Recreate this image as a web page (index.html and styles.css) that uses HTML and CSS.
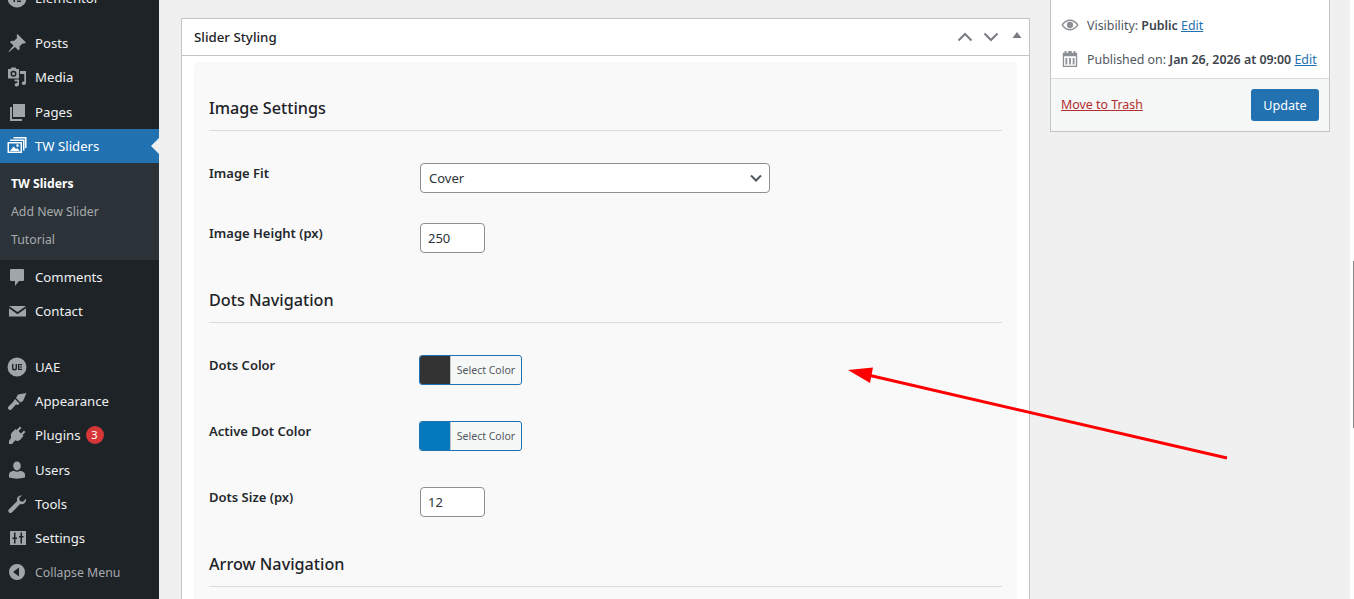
FILE: index.html
```html
<!DOCTYPE html>
<html lang="en">
<head>
<meta charset="utf-8">
<title>Edit Slider</title>
<link rel="stylesheet" href="styles.css">
</head>
<body>
<div class="app">
  <nav class="side">
    <div class="item item-top"><svg class="ic" viewBox="0 0 20 20"><path fill-rule="evenodd" d="M10 .5a9.500 9.500 0 1 1 0 19 9.500 9.500 0 0 1 0-19zM6.500 6v8H8V6zM10 6v1.500h4V6zm0 3.200v1.600h4V9.200zm0 3.300V14h4v-1.500z"/></svg><span>Elementor</span></div>
    <div class="gap-a"></div>
    <div class="item"><svg class="ic" viewBox="0 0 20 20"><path d="M10.400 1 19 9.600c-.9.900-2.200 1.200-3.400.8l-3.200 3.200c.5 1.500.2 3-.8 4L8 14l-6 5-.5-.5 5-6L2.900 8.900c1-1 2.600-1.300 4-.8L10.100 4.900C9.700 3.500 9.500 2 10.400 1z"/></svg><span>Posts</span></div>
    <div class="item"><svg class="ic" viewBox="0 0 20 20"><path fill-rule="evenodd" d="M1 2h2.500l1-1.500h4L9.500 2H12v9.500H1zm5.500 1.700a3 3 0 1 0 0 6 3 3 0 0 0 0-6zM6.500 5.200a1.500 1.500 0 1 1 0 3 1.500 1.500 0 0 1 0-3zM13 4h6v12c0 1.200-1 2-2.200 2s-2-.7-2-1.700.9-1.700 2-1.700l.5.100V7h-4.300zM7.500 12.500h4.500v5c0 1.100-.9 2-2 2s-2.300-.6-2.300-1.600.9-1.800 2-1.800l.6.100V14.300H7.500z"/></svg><span>Media</span></div>
    <div class="item"><svg class="ic" viewBox="0 0 20 20"><path d="M6 2h12v13H6zM3 5h2v12h10v2H3z"/></svg><span>Pages</span></div>
    <div class="item item-active"><svg class="ic ic-white" viewBox="0 0 20 20"><path fill-rule="evenodd" d="M5 1h14.500v11H18V2.500H6.500V1zM3 3.500h14.500v11H16V5H3zM.5 6H15v11H.5zm1.500 1.500v8h11.500v-8zm8.500.800a1.300 1.300 0 1 1 0 2.600 1.300 1.300 0 0 1 0-2.600zM3 15l3.500-4.500 2.500 2.500 1.500-1 2 3z"/></svg><span>TW Sliders</span></div>
    <div class="sub">
      <div class="sub-item sub-current">TW Sliders</div>
      <div class="sub-item">Add New Slider</div>
      <div class="sub-item">Tutorial</div>
    </div>
    <div class="item"><svg class="ic" viewBox="0 0 20 20"><path d="M4 2h12a1 1 0 0 1 1 1v10a1 1 0 0 1-1 1h-4l-4 5v-5H4a1 1 0 0 1-1-1V3a1 1 0 0 1 1-1z"/></svg><span>Comments</span></div>
    <div class="item"><svg class="ic" viewBox="0 0 20 20"><path d="M2 5h17l-8.500 6zM2 7.200V15.500h17V7.200l-8.500 6z"/></svg><span>Contact</span></div>
    <div class="gap-b"></div>
    <div class="item"><svg class="ic" viewBox="0 0 20 20"><path fill-rule="evenodd" d="M10 .5a9.500 9.500 0 1 1 0 19 9.500 9.500 0 0 1 0-19zM5 7v4a2.500 2.500 0 0 0 5 0V7H8.600v4a1.100 1.100 0 0 1-2.200 0V7zm6 0v6h4v-1.200h-2.800V7zm1.500 0v1.200H15V7zm0 2.400v1.200H15V9.400z"/></svg><span>UAE</span></div>
    <div class="item"><svg class="ic" viewBox="0 0 20 20"><path d="M11 3.500 19.500 2 16 10l-2.500 1.500L9 7zM8 8l4.500 4.500-1.500 1.500-2-.5-4.500 5c-1 .9-2.500.5-3.200-.4-.6-.8-.6-1.900.2-2.700L6 11z"/></svg><span>Appearance</span></div>
    <div class="item"><svg class="ic" viewBox="0 0 20 20"><path d="M13 1.500 14.500 3 11.500 6l2.500 2.500 3-3 1.500 1.500-3 3 1 1-3 3.500c-1.400 1.500-3.500 1.800-5.200.8L5 19H2v-3l2.200-3.500C3.400 10.800 3.700 8.700 5.200 7.300L8.500 4l1 1z"/></svg><span>Plugins</span><span class="badge">3</span></div>
    <div class="item"><svg class="ic" viewBox="0 0 20 20"><path d="M10 1.500c2.300 0 3.800 1.900 3.800 4.300S12.300 10.500 10 10.500 6.200 8.200 6.200 5.800 7.700 1.500 10 1.500zM7 10.800c1.800 1.200 4.200 1.200 6 0 2.800.6 5 1.700 5 3.700v3c-5 1.500-11 1.500-16 0v-3c0-2 2.200-3.100 5-3.700z"/></svg><span>Users</span></div>
    <div class="item"><svg class="ic" viewBox="0 0 20 20"><path d="M15 1.500c-2.300-.5-4.800 1-5 3.500-.1.700 0 1.400.2 2L2 15.200c-1 1-1 2.400 0 3.200.9.800 2.200.8 3.100-.1l8-8.200c2.800.9 5.500-1 5.900-3.600.1-.6 0-1.200-.1-1.700l-3 2.900-3-.8-.8-3z"/></svg><span>Tools</span></div>
    <div class="item"><svg class="ic" viewBox="0 0 20 20"><path fill-rule="evenodd" d="M3 3h16v14H3zm4 1.500v5H5.500V11H7v4.500h1.500V11H10V9.500H8.500v-5zm6.500 0V8H12v1.500h1.500v6H15v-6h1.500V8H15V4.500z"/></svg><span>Settings</span></div>
    <div class="item item-collapse"><svg class="ic" viewBox="0 0 20 20"><path fill-rule="evenodd" d="M10 2a8 8 0 1 1 0 16 8 8 0 0 1 0-16zm2 3.500L6 10l6 4.500z"/></svg><span>Collapse Menu</span></div>
  </nav>
  <main class="main">
    <section class="col-main">
      <div class="postbox">
        <header class="box-head">
          <h2 class="box-title">Slider Styling</h2>
          <div class="box-ctrl">
            <svg class="chev" viewBox="0 0 16 10"><path d="M1.500 8.500 8 2l6.500 6.500"/></svg>
            <svg class="chev" viewBox="0 0 16 10"><path d="M1.500 1.500 8 8l6.500-6.500"/></svg>
            <svg class="tri" viewBox="0 0 10 6"><path d="M5 0l4.500 6H.5z"/></svg>
          </div>
        </header>
        <div class="box-body">
          <div class="panel">
            <h3 class="group">Image Settings</h3>
            <div class="row row-select"><label class="lbl">Image Fit</label>
              <div class="select"><span>Cover</span><svg class="sel-arrow" viewBox="0 0 12 8"><path d="M1 1.500 6 6.500l5-5"/></svg></div></div>
            <div class="row row-num"><label class="lbl">Image Height (px)</label><div class="num">250</div></div>
            <h3 class="group">Dots Navigation</h3>
            <div class="row row-color"><label class="lbl">Dots Color</label><div class="color"><span class="swatch swatch-dark"></span><span class="color-text">Select Color</span></div></div>
            <div class="row row-color"><label class="lbl">Active Dot Color</label><div class="color"><span class="swatch swatch-blue"></span><span class="color-text">Select Color</span></div></div>
            <div class="row row-num"><label class="lbl">Dots Size (px)</label><div class="num">12</div></div>
            <h3 class="group">Arrow Navigation</h3>
          </div>
        </div>
      </div>
    </section>
    <aside class="col-side">
      <div class="pub">
        <div class="pub-body">
          <div class="pub-line"><svg class="pub-ic" viewBox="0 0 20 20"><path fill-rule="evenodd" d="M10 4c4.200 0 7.500 2.800 9.500 6-2 3.200-5.300 6-9.500 6S2.500 13.200.5 10C2.500 6.800 5.800 4 10 4zm0 1.500C6.800 5.500 4 7.500 2.300 10 4 12.500 6.800 14.500 10 14.500s6-2 7.700-4.500C16 7.500 13.200 5.500 10 5.500zM10 6.500a3.500 3.500 0 1 1 0 7 3.500 3.500 0 0 1 0-7z"/></svg><span>Visibility: <b>Public</b> <a class="lnk">Edit</a></span></div>
          <div class="pub-line"><svg class="pub-ic" viewBox="0 0 20 20"><path fill-rule="evenodd" d="M4 1h2v2h2V1h4v2h2V1h2v2h2v16H2V3h2zM3.500 7v10.500h13V7zM5 9h2v7H5zm4 0h2v7H9zm4 0h2v7h-2z"/></svg><span>Published on: <b>Jan 26, 2026 at 09:00</b> <a class="lnk">Edit</a></span></div>
        </div>
        <div class="pub-foot"><a class="trash">Move to Trash</a><div class="update">Update</div></div>
      </div>
    </aside>
  </main>
</div>
<div class="rail"><div class="thumb"></div></div>
<svg class="arrow" viewBox="0 0 1354 599"><path d="M1227 458 868 375" /><polygon points="848,370 873,367.500 870,383"/></svg>
</body>
</html>
```
FILE: styles.css
```css
* { box-sizing: border-box; }
html, body { margin: 0; height: 599px; overflow: hidden; }
body { font-family: "Noto Sans", sans-serif; font-size: 13px; color: #2c3338; background: #f0f0f0; position: relative; }
.app { display: flex; height: 599px; overflow: hidden; }
.side { width: 159px; flex: none; background: #1d2327; color: #f0f0f1; height: 599px; overflow: hidden; }
.item { display: flex; align-items: center; height: 34.2px; padding-left: 7px; gap: 8px; font-size: 13.2px; }
.item-top { margin-top: -19px; }
.gap-a { height: 11px; }
.gap-b { height: 21.7px; }
.ic { width: 20px; height: 20px; flex: none; fill: #a0a5aa; }
.ic-white { fill: #fff; }
.item-active { background: #2271b1; color: #fff; position: relative; }
.item-active::after { content: ""; position: absolute; right: 0; top: 50%; margin-top: -8px; border: 8px solid transparent; border-right-color: #f0f0f0; border-left: 0; }
.item-collapse { color: #a7aaad; font-size: 12.3px; }
.sub { background: #2c3338; padding: 7px 0 7px; height: 97px; }
.sub-item { height: 28px; line-height: 27px; padding-left: 11px; font-size: 12.3px; color: #a7aaad; }
.sub-current { color: #fff; font-weight: 700; font-size: 12.2px; }
.badge { width: 18px; height: 18px; border-radius: 50%; background: #d63638; color: #fff; font-size: 11px; line-height: 18px; text-align: center; margin-left: -3px; }
.main { flex: 1; display: flex; align-items: flex-start; gap: 20px; padding-left: 22px; min-width: 0; }
.col-main { width: 849px; flex: none; padding-top: 18px; }
.col-side { width: 280px; flex: none; }
.postbox { background: #fff; border: 1px solid #c3c4c7; border-bottom: 0; height: 640px; overflow: hidden; }
.box-head { height: 37px; border-bottom: 1px solid #c3c4c7; display: flex; align-items: center; justify-content: space-between; padding: 0 7px 0 12px; }
.box-title { margin: 0; font-size: 13.3px; font-weight: 500; color: #1d2327; }
.box-ctrl { display: flex; align-items: center; gap: 10px; }
.chev { width: 16px; height: 10px; fill: none; stroke: #787c82; stroke-width: 2; }
.tri { width: 10px; height: 6px; fill: #787c82; margin-left: 3px; margin-bottom: 4px; }
.box-body { padding: 6px 12px 0; }
.panel { background: #f9f9f9; border-radius: 4px; padding: 32px 15px 0; height: 600px; }
.group { margin: 0; height: 37px; padding: 1px 0 0; line-height: 27px; font-size: 16.2px; font-weight: 500; color: #1d2327; border-bottom: 1px solid #dcdcde; }
.row { display: flex; align-items: flex-start; }
.row-select { margin-top: 32px; height: 30px; }
.row-num { margin-top: 30px; height: 30px; }
.row-color { margin-top: 32px; height: 30px; }
.row-color + .row-color { margin-top: 36px; }
.row + .group { margin-top: 33px; }
.row-select + .row-num { margin-top: 30px; }
.row-color + .row-num { margin-top: 36px; }
.lbl { width: 211px; flex: none; font-size: 13px; font-weight: 600; color: #23282d; line-height: 20px; }
.select { width: 350px; height: 30px; background: #fff; border: 1px solid #8c8f94; border-radius: 4px; display: flex; align-items: center; justify-content: space-between; padding: 0 7px 0 8px; font-size: 13px; color: #2c3338; }
.sel-arrow { width: 12px; height: 8px; fill: none; stroke: #50575e; stroke-width: 2; }
.num { width: 65px; height: 30px; background: #fff; border: 1px solid #8c8f94; border-radius: 4px; font-size: 13px; line-height: 28px; padding-left: 7px; color: #2c3338; }
.color { width: 103px; height: 30px; border: 1px solid #2271b1; border-radius: 3px; display: flex; overflow: hidden; background: #f6f7f7; margin-left: -1px; }
.swatch { width: 30px; flex: none; border-right: 1px solid #c3c4c7; box-sizing: content-box; }
.swatch-dark { background: #333; }
.swatch-blue { background: #0479bd; }
.color-text { flex: 1; text-align: center; font-size: 10.5px; line-height: 28px; color: #50575e; }
.pub { background: #fff; border: 1px solid #c3c4c7; border-top: 0; }
.pub-body { padding: 15px 10px 0; height: 78px; }
.pub-line { display: flex; align-items: center; gap: 8px; height: 20px; margin-bottom: 14px; font-size: 12.4px; color: #50575e; }
.pub-line b { color: #3c434a; font-weight: 600; }
.pub-ic { width: 18px; height: 18px; flex: none; fill: #8c8f94; }
.lnk { color: #2271b1; text-decoration: underline; }
.pub-foot { background: #f6f7f7; border-top: 1px solid #dcdcde; height: 53px; display: flex; align-items: center; justify-content: space-between; padding: 0 10px; }
.trash { color: #b32d2e; text-decoration: underline; font-size: 12.4px; margin-bottom: 2px; }
.update { width: 68px; height: 32px; background: #2271b1; color: #fff; border-radius: 3px; font-size: 12.6px; line-height: 33px; text-align: center; }
.rail { position: absolute; right: 0; top: 0; width: 4px; height: 599px; background: #fdfdfd; }
.thumb { position: absolute; right: 0; top: 261px; width: 1px; height: 167px; background: #8a8a8a; }
.arrow { position: absolute; left: 0; top: 0; width: 1354px; height: 599px; pointer-events: none; }
.arrow path { stroke: #f00; stroke-width: 3; fill: none; }
.arrow polygon { fill: #f00; }
```
